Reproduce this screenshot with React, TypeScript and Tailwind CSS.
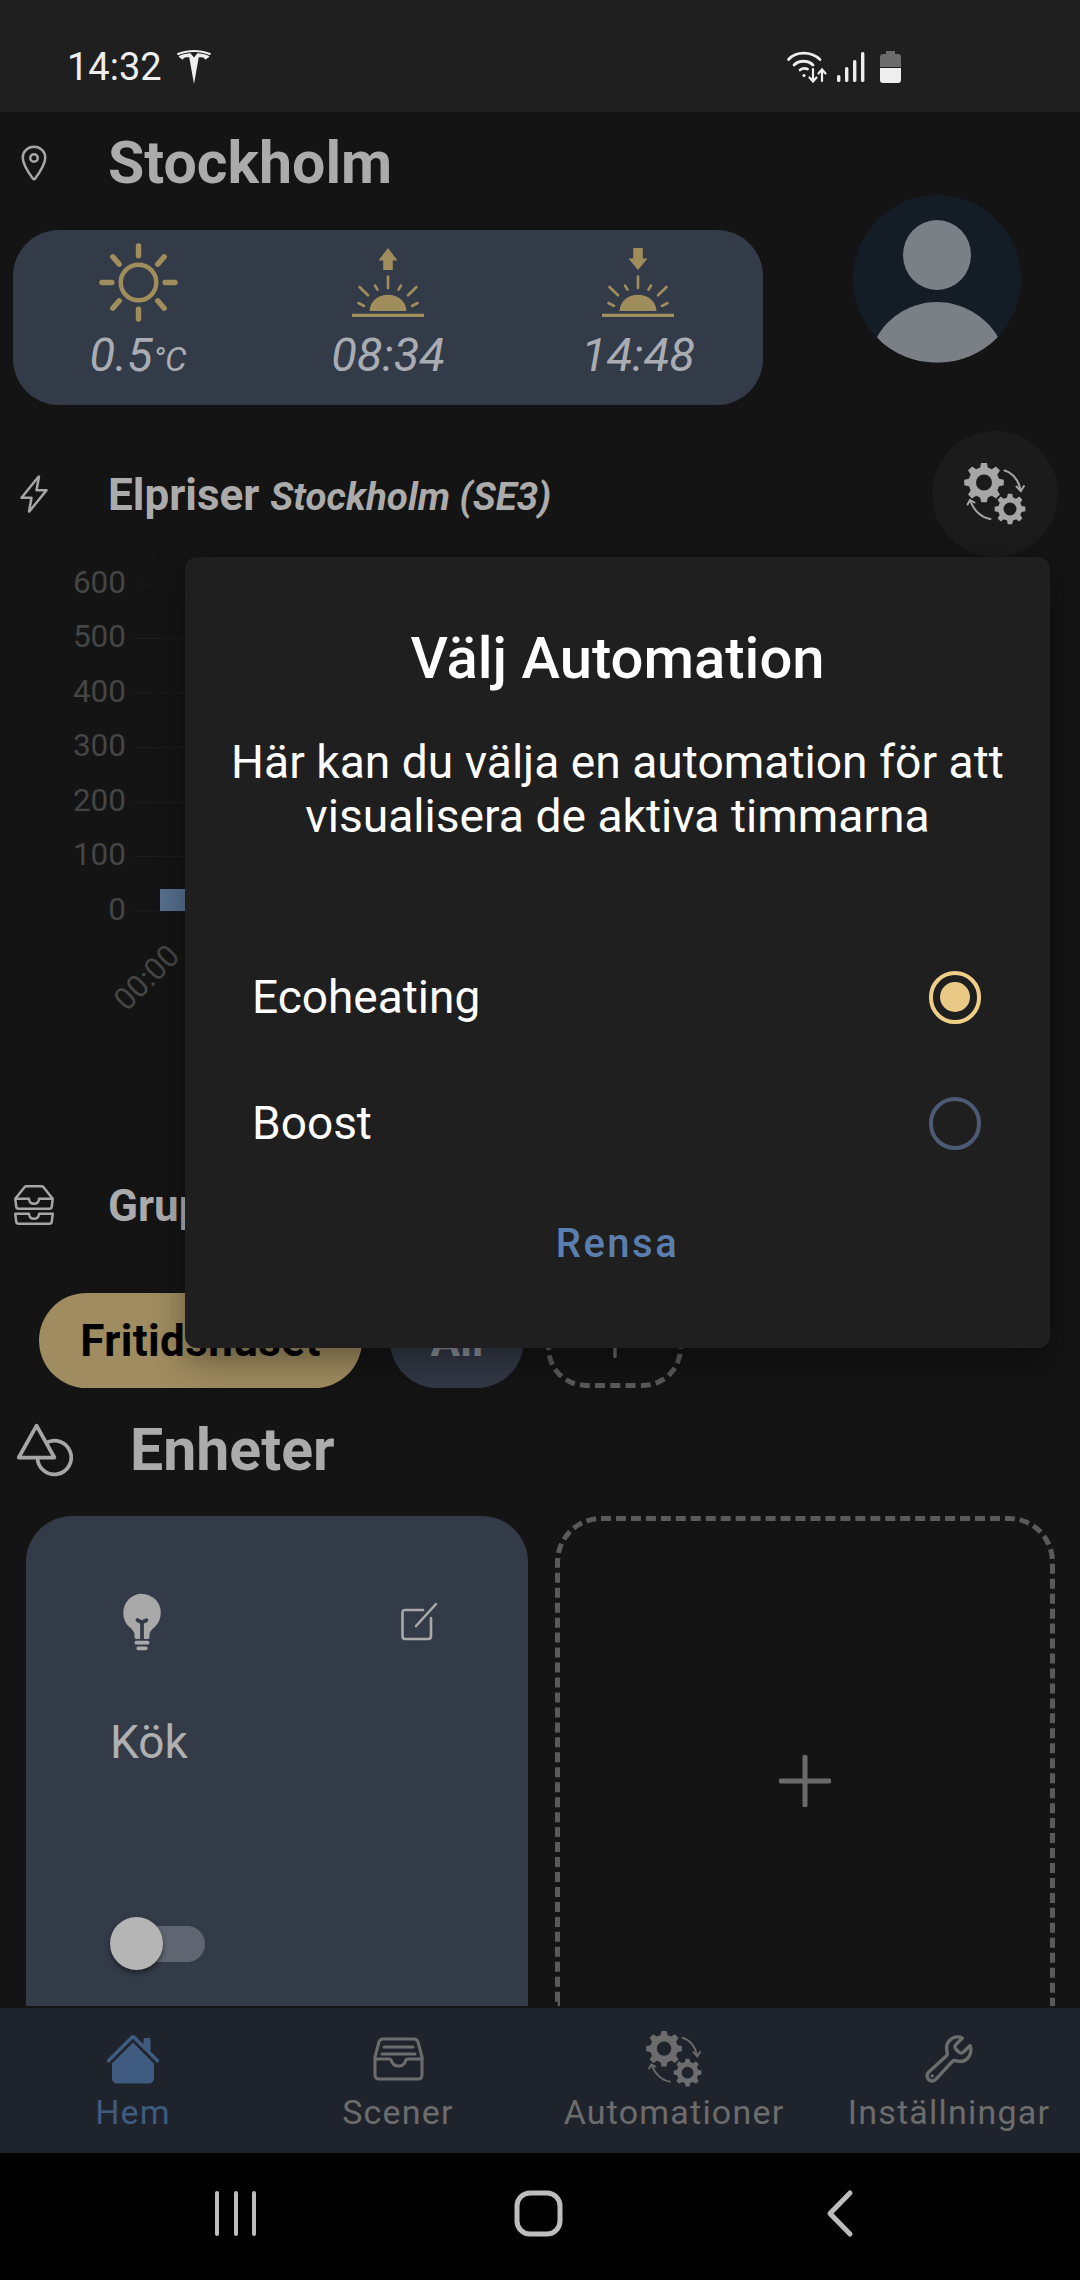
import React from 'react';
import { BsHouseFill, BsInboxes } from 'react-icons/bs';
import { IoBuildOutline, IoBulb, IoFlashOutline, IoLocationOutline, IoShapesOutline } from 'react-icons/io5';
import { SiTesla } from 'react-icons/si';

const gearPath = (cx: number, cy: number, outer: number, inner: number, hole: number, teeth: number) => {
    const step = (Math.PI * 2) / teeth;
    const pts: string[] = [];
    for (let i = 0; i < teeth; i++) {
        const a = i * step - Math.PI / 2;
        const offsets: [number, number][] = [
            [-0.32, inner],
            [-0.18, outer],
            [0.18, outer],
            [0.32, inner],
        ];
        offsets.forEach(([o, r]) => {
            const t = a + o * step;
            pts.push(`${(cx + r * Math.cos(t)).toFixed(2)} ${(cy + r * Math.sin(t)).toFixed(2)}`);
        });
    }
    const ring = `M${cx - hole} ${cy}a${hole} ${hole} 0 1 0 ${hole * 2} 0a${hole} ${hole} 0 1 0 ${-hole * 2} 0Z`;
    return `M${pts.join('L')}Z${ring}`;
};

const GearsIcon = ({ className }: { className: string }) => (
    <svg viewBox="0 0 62 62" className={className} fill="none">
        <path fillRule="evenodd" fill="currentColor" d={gearPath(20, 19.5, 20, 15.5, 8, 8)} />
        <path fillRule="evenodd" fill="currentColor" d={gearPath(46, 46, 15.5, 12, 6.5, 8)} />
        <path d="M40.5 7.5C49 10 55 18 56.5 27" stroke="currentColor" strokeWidth="2" strokeLinecap="round" />
        <path d="M52.5 23.5L56.8 28.2L60 23" stroke="currentColor" strokeWidth="2" strokeLinecap="round" />
        <path d="M26.5 56C17.5 55 9.5 47 6.5 38" stroke="currentColor" strokeWidth="2" strokeLinecap="round" />
        <path d="M3.5 41.5L6 37L10.5 39.5" stroke="currentColor" strokeWidth="2" strokeLinecap="round" />
    </svg>
);

const SunIcon = () => (
    <svg viewBox="0 0 80 80" className="h-[79px] w-[79px] text-[#a08d5c]" fill="none" stroke="currentColor" strokeLinecap="round">
        <ellipse cx="40" cy="40" rx="18" ry="18" strokeWidth="4.5" />
        <path
            strokeWidth="5.5"
            d="M40 3V13M40 67V77M3 40H13M67 40H77M14 14L20.5 21.5M66 14L59.5 21.5M14 66L20.5 58.5M66 66L59.5 58.5"
        />
    </svg>
);

const HorizonIcon = ({ down }: { down?: boolean }) => (
    <svg viewBox="0 0 72 69" className="mb-[5px] h-[69px] w-[72px] text-[#a08d5c]" fill="currentColor">
        {down ? (
            <path d="M31.2 0H40.8V10.5H45.5L36 22L26.5 10.5H31.2Z" />
        ) : (
            <path d="M36 0L45.5 12.5H40.8V22H31.2V12.5H26.5Z" />
        )}
        <path d="M17.5 63C18 53 26 46.7 36 46.7C46 46.7 54 53 54.5 63Z" />
        <rect x="0" y="65.7" width="72" height="3.3" />
        <path
            fill="none"
            stroke="currentColor"
            strokeWidth="2.6"
            strokeLinecap="round"
            d="M36 28.5V40M7.5 39L16 47.3M64.5 39L56 47.3M23 37.5L25.5 41.7M49 37.5L46.5 41.7M6.5 55L12 58M65.5 55L60 58"
        />
    </svg>
);

const WifiIcon = () => (
    <svg viewBox="0 0 40 32" className="h-[32px] w-[42px]" fill="none" stroke="#eeeeee" strokeLinecap="round">
        <path strokeWidth="2.8" d="M1.5 8.5C9 0 24 0 33 8.5" />
        <path strokeWidth="2.8" d="M7 14C12 9 21 9 26 14" />
        <path strokeWidth="2.8" d="M13 19C15.5 17 18 17 20.5 18" />
        <circle cx="17" cy="24.5" r="1.6" fill="#eeeeee" stroke="none" />
        <path strokeWidth="2.2" d="M26 18V30M22.5 26.5L26 30.5L29.5 26.5" />
        <path strokeWidth="2.2" d="M35 30V19M31.5 22.5L35 18.5L38.5 22.5" />
    </svg>
);

const SignalIcon = () => (
    <svg viewBox="0 0 28 30" className="h-[30px] w-[28px]" fill="#eeeeee">
        <rect x="0" y="23" width="3.4" height="7" rx="1.6" />
        <rect x="8" y="15" width="3.4" height="15" rx="1.6" />
        <rect x="16" y="8" width="3.4" height="22" rx="1.6" />
        <rect x="24" y="0" width="3.4" height="30" rx="1.6" />
    </svg>
);

const BatteryIcon = () => (
    <svg viewBox="0 0 21 32" className="h-[32px] w-[21px]">
        <path fill="#6b6b6b" d="M6 0H15V3H18Q21 3 21 6V16H0V6Q0 3 3 3H6Z" />
        <path fill="#eeeeee" d="M0 17H21V29Q21 32 18 32H3Q0 32 0 29Z" />
    </svg>
);

const EditIcon = () => (
    <svg viewBox="0 0 38 38" className="h-[38px] w-[38px] text-[#a9a9a9]" fill="none" stroke="currentColor" strokeLinecap="round">
        <path strokeWidth="2.6" d="M22 7H4Q1.5 7 1.5 9.5V33Q1.5 36 4 36H27Q30 36 30 33V15" />
        <path strokeWidth="2.6" d="M15 23L35 1" />
    </svg>
);

const ScenerIcon = () => (
    <svg viewBox="0 0 51 44" className="h-[44px] w-[51px]" fill="none" stroke="currentColor" strokeWidth="3" strokeLinecap="round" strokeLinejoin="round">
        <path d="M2 20L6 5Q7 2 10 2H41Q44 2 45 5L49 20V38Q49 42 45 42H6Q2 42 2 38Z" />
        <path d="M2 22H16Q18 22 18.5 24Q20 29 25.5 29Q31 29 32.5 24Q33 22 35 22H49" />
        <path d="M11 10H40M9 17H42" />
    </svg>
);

const PlusMark = ({ size }: { size: string }) => (
    <svg viewBox="0 0 52 52" className={size} stroke="#6a6a6a" strokeWidth="5" strokeLinecap="round">
        <path d="M26 2V50M2 26H50" />
    </svg>
);

const SectionRow = ({ icon, children, className }: { icon: React.ReactNode; children: React.ReactNode; className: string }) => (
    <div className={`flex items-center pl-[14px] ${className}`}>
        <div className="flex w-[40px] justify-center text-[#a6a6a6]">{icon}</div>
        {children}
    </div>
);

const weather = [
    { icon: <SunIcon />, value: '0.5', unit: '°C' },
    { icon: <HorizonIcon />, value: '08:34' },
    { icon: <HorizonIcon down />, value: '14:48' },
];

const axis = ['600', '500', '400', '300', '200', '100', '0'];

const tabs = [
    { label: 'Hem', icon: <BsHouseFill className="h-[56px] w-[56px]" />, active: true },
    { label: 'Scener', icon: <ScenerIcon /> },
    { label: 'Automationer', icon: <GearsIcon className="h-[56px] w-[56px]" /> },
    { label: 'Inställningar', icon: <IoBuildOutline className="h-[54px] w-[54px]" /> },
];

const App: React.FC = () => {
    return (
        <div className="relative flex h-[2280px] w-[1080px] flex-col overflow-hidden bg-[#141414] font-['Roboto',sans-serif]">
            {/* Status bar */}
            <div className="flex h-[112px] shrink-0 items-center bg-[#1f1f1f] pt-[22px] pl-[67px]">
                <span className="text-[38px] leading-[44px] text-[#eeeeee]">14:32</span>
                <SiTesla className="ml-[15px] h-[34px] w-[34px] text-[#eeeeee]" />
                <div className="ml-[575px] flex items-center gap-[9px]">
                    <WifiIcon />
                    <SignalIcon />
                    <div className="ml-[6px]">
                        <BatteryIcon />
                    </div>
                </div>
            </div>

            {/* Home screen */}
            <div className="h-[1896px] shrink-0 overflow-hidden">
                <SectionRow
                    className="h-[83px] pt-[18px]"
                    icon={<IoLocationOutline className="h-[40px] w-[40px]" />}
                >
                    <h1 className="ml-[54px] text-[59px] font-bold leading-[62px] text-[#ababab]">Stockholm</h1>
                </SectionRow>

                <div className="flex h-[210px] items-start pl-[13px]">
                    <div className="mt-[35px] grid h-[175px] w-[750px] grid-cols-3 rounded-[46px] bg-[#343b48]">
                        {weather.map((item) => (
                            <div key={item.value} className="flex flex-col items-center">
                                <div className="flex h-[92px] items-end justify-center">{item.icon}</div>
                                <div className="mt-[8px] text-[47px] italic leading-[50px] text-[#a9adb3]">
                                    {item.value}
                                    {item.unit && <span className="text-[34px]">{item.unit}</span>}
                                </div>
                            </div>
                        ))}
                    </div>
                    <div className="ml-[90px]">
                        <svg viewBox="0 0 168 168" className="h-[168px] w-[168px]">
                            <defs>
                                <clipPath id="avatar-clip">
                                    <circle cx="84" cy="84" r="84" />
                                </clipPath>
                            </defs>
                            <circle cx="84" cy="84" r="84" fill="#141d26" />
                            <ellipse cx="84" cy="60" rx="34" ry="35" fill="#7a8085" />
                            <g clipPath="url(#avatar-clip)">
                                <path d="M24 142C36 120 60 107 84 107C108 107 132 120 145 142C120 176 48 176 24 142Z" fill="#7a8085" />
                            </g>
                        </svg>
                    </div>
                </div>

                <SectionRow
                    className="mt-[25px] h-[127px] pr-[22px]"
                    icon={<IoFlashOutline className="h-[42px] w-[42px]" />}
                >
                    <div className="mt-[4px] ml-[54px] text-[44px] font-bold leading-[48px] text-[#ababab]">
                        Elpriser{' '}
                        <span className="text-[38.5px] italic">Stockholm (SE3)</span>
                    </div>
                    <div className="ml-auto flex h-[126px] w-[126px] items-center justify-center rounded-full bg-[#1b1b1b]">
                        <GearsIcon className="h-[62px] w-[62px] text-[#a6a6a6]" />
                    </div>
                </SectionRow>

                {/* Price chart, mostly covered by the dialog */}
                <div className="h-[608px]">
                    <div className="flex">
                        <div className="-mt-[1.5px] w-[126px] shrink-0">
                            {axis.map((tick) => (
                                <div key={tick} className="h-[54.5px] text-right text-[31.5px] leading-[54.5px] text-[#454545]">
                                    {tick}
                                </div>
                            ))}
                        </div>
                        <svg viewBox="0 0 400 382" className="ml-[8px] h-[382px] w-[400px]" fill="none">
                            <path
                                stroke="#1d1d1d"
                                strokeWidth="1"
                                d="M0 27H400M0 81.5H400M0 136H400M0 190.5H400M0 245H400M0 299.5H400M0 354H400"
                            />
                            <rect x="26" y="332" width="26" height="22" fill="#56708f" />
                        </svg>
                    </div>
                    <div className="mt-[25px] ml-[107px] w-[80px] -rotate-45 text-center text-[31px] leading-[28px] whitespace-nowrap text-[#454545]">
                        00:00
                    </div>
                </div>

                <SectionRow
                    className="h-[80px]"
                    icon={<BsInboxes className="h-[40px] w-[40px]" />}
                >
                    <h2 className="mt-[2px] ml-[54px] text-[44px] font-bold leading-[48px] text-[#ababab]">Grupper</h2>
                </SectionRow>

                <div className="mt-[48px] flex items-stretch pl-[39px]">
                    <div className="flex h-[95px] w-[323px] items-center justify-center rounded-full bg-[#9f8c60] text-[44px] font-bold tracking-[0.4px] text-black">
                        Fritidshuset
                    </div>
                    <div className="ml-[28px] flex h-[95px] w-[134px] items-center justify-center rounded-full bg-[#323845] text-[44px] font-bold text-[#8a8f98]">
                        All
                    </div>
                    <div className="ml-[22px] flex h-[95px] w-[137px] items-center justify-center rounded-[40px] border-[5px] border-dashed border-[#5a5a5a]">
                        <PlusMark size="h-[34px] w-[34px]" />
                    </div>
                </div>

                <div className="mt-[31px] flex h-[62px] items-center pl-[15px]">
                    <IoShapesOutline className="h-[60px] w-[60px] text-[#a6a6a6]" />
                    <h2 className="ml-[55px] text-[59px] font-bold leading-[62px] text-[#ababab]">Enheter</h2>
                </div>

                <div className="mt-[35px] flex gap-[27px] pl-[26px]">
                    <div className="h-[490px] w-[502px] rounded-t-[46px] bg-[#343b48] pt-[76px] pr-[89px] pl-[84px]">
                        <div className="flex h-[60px] items-center justify-between pl-[2px]">
                            <IoBulb className="h-[60px] w-[60px] text-[#a9a9a9]" />
                            <EditIcon />
                        </div>
                        <div className="mt-[64px] text-[46px] leading-[52px] text-[#b0b0b0]">Kök</div>
                        <div className="mt-[149px] flex items-center">
                            <div className="z-10 h-[53px] w-[53px] rounded-full bg-[#b5b5b5] shadow-[0_3px_5px_rgba(0,0,0,0.45)]" />
                            <div className="-ml-[36px] h-[36px] w-[78px] rounded-full bg-[#5f6672]" />
                        </div>
                    </div>
                    <div className="flex h-[490px] w-[500px] items-center justify-center rounded-t-[46px] border-[5px] border-b-0 border-dashed border-[#5a5a5a] pt-[34px]">
                        <PlusMark size="h-[52px] w-[52px]" />
                    </div>
                </div>
            </div>

            {/* Bottom tabs */}
            <div className="grid h-[145px] shrink-0 grid-cols-[266px_264px_288px_262px] bg-[#1f242c] pt-[23px]">
                {tabs.map((tab) => (
                    <div
                        key={tab.label}
                        className={`flex flex-col items-center ${tab.active ? 'text-[#3f5b7f]' : 'text-[#6c6c6c]'}`}
                    >
                        <div className="flex h-[56px] items-center justify-center">{tab.icon}</div>
                        <div className="mt-[6px] text-[34px] leading-[38px] tracking-[1.2px] whitespace-nowrap">{tab.label}</div>
                    </div>
                ))}
            </div>

            {/* Android navigation */}
            <div className="flex h-[127px] shrink-0 items-center bg-black pb-[7px]">
                <svg viewBox="0 0 1080 50" className="h-[50px] w-[1080px]" fill="none" stroke="#bdbdbd" strokeLinecap="round" strokeLinejoin="round">
                    <path strokeWidth="4" d="M217 5V46M236 5V46M254 5V46" />
                    <rect x="517" y="5" width="43" height="41" rx="13" strokeWidth="5" />
                    <path strokeWidth="5" d="M850 5L830 25.5L850 46" />
                </svg>
            </div>

            {/* Automation dialog */}
            <div className="absolute top-[557px] left-[185px] flex h-[791px] w-[865px] flex-col items-center rounded-[12px] bg-[#1f1f1f] shadow-[0_14px_34px_rgba(0,0,0,0.35)]">
                <h2 className="mt-[69px] text-[58px] font-medium leading-[64px] text-white">Välj Automation</h2>
                <p className="mt-[45px] w-[820px] text-center text-[46.2px] leading-[54px] text-white">
                    Här kan du välja en automation för att visualisera de aktiva timmarna
                </p>
                <div className="mt-[91px] flex h-[126px] w-full items-center justify-between pr-[69px] pl-[67px]">
                    <span className="text-[46px] leading-[52px] text-white">Ecoheating</span>
                    <div className="flex h-[53px] w-[52px] items-center justify-center rounded-full border-[4px] border-[#efcf88]">
                        <div className="h-[30px] w-[30px] rounded-full bg-[#e8c985]" />
                    </div>
                </div>
                <div className="flex h-[126px] w-full items-center justify-between pr-[69px] pl-[67px]">
                    <span className="text-[46px] leading-[52px] text-white">Boost</span>
                    <div className="h-[53px] w-[52px] rounded-full border-[4px] border-[#4d5a74]" />
                </div>
                <button className="mt-[35px] text-[40px] font-medium leading-[46px] tracking-[2.5px] text-[#5a7fae]">
                    Rensa
                </button>
            </div>
        </div>
    );
};

export default App;
